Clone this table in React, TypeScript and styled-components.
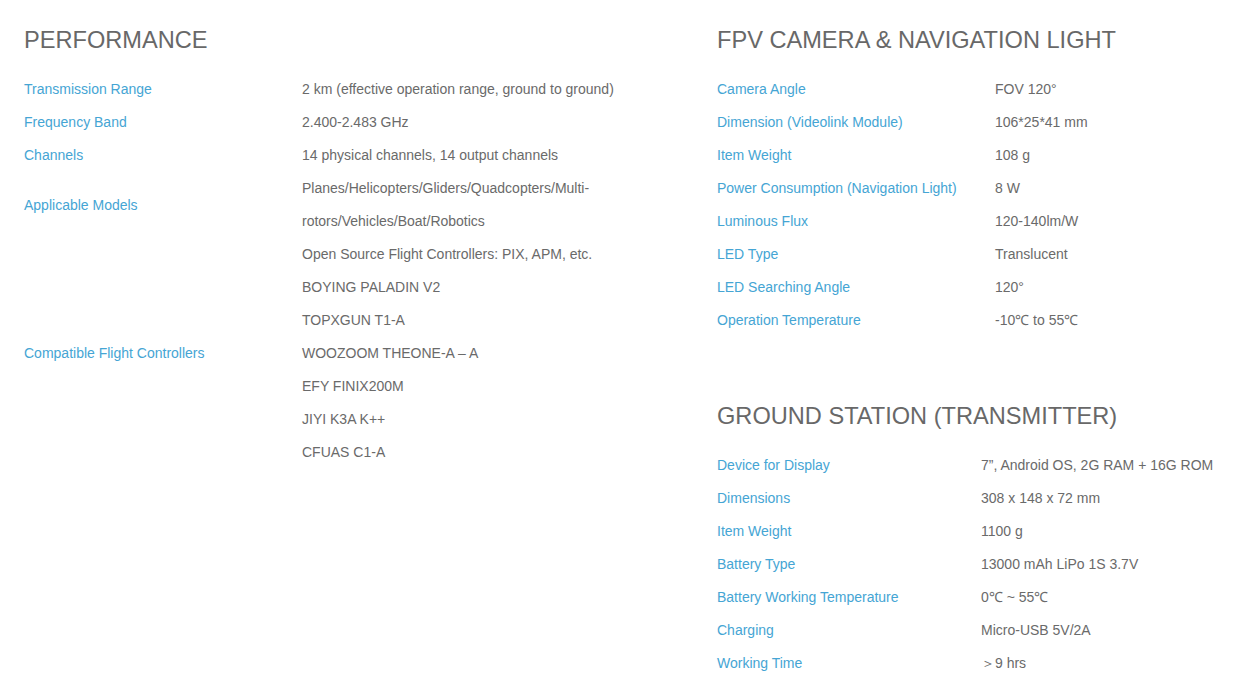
import React from 'react';
import styled, { createGlobalStyle } from 'styled-components';

const GlobalStyle = createGlobalStyle`
  html, body {
    margin: 0;
    padding: 0;
    background: #ffffff;
  }
  body {
    font-family: "Liberation Sans", Arial, sans-serif;
    -webkit-font-smoothing: antialiased;
  }
`;

const Page = styled.div`
  display: grid;
  grid-template-columns: 693px 1fr;
  padding: 26px 0 0 24px;
  width: 1252px;
  box-sizing: border-box;
  overflow: hidden;
`;

const Column = styled.div`
  display: flex;
  flex-direction: column;
`;

const Section = styled.section<{ $gap?: number }>`
  margin-bottom: ${p => p.$gap || 0}px;
`;

const Heading = styled.h2`
  margin: 0 0 19px;
  font-size: 23.6px;
  line-height: 28px;
  font-weight: 400;
  color: #686868;
`;

const SpecGrid = styled.div<{ $labelWidth: number }>`
  display: grid;
  grid-template-columns: ${p => p.$labelWidth}px auto;
  justify-content: start;
  align-items: center;
  font-size: 14px;
  line-height: 33px;
`;

const Label = styled.div`
  color: #45a5d4;
`;

const Value = styled.div`
  color: #6a6a6a;
  white-space: nowrap;
`;

type Spec = { label: string; values: React.ReactNode[] };

const performance: Spec[] = [
  { label: 'Transmission Range', values: ['2 km (effective operation range, ground to ground)'] },
  { label: 'Frequency Band', values: ['2.400-2.483 GHz'] },
  { label: 'Channels', values: ['14 physical channels, 14 output channels'] },
  {
    label: 'Applicable Models',
    values: ['Planes/Helicopters/Gliders/Quadcopters/Multi-', 'rotors/Vehicles/Boat/Robotics'],
  },
  {
    label: 'Compatible Flight Controllers',
    values: [
      'Open Source Flight Controllers: PIX, APM, etc.',
      'BOYING PALADIN V2',
      'TOPXGUN T1-A',
      'WOOZOOM THEONE-A \u2013 A',
      'EFY FINIX200M',
      'JIYI K3A K++',
      'CFUAS C1-A',
    ],
  },
];

const camera: Spec[] = [
  { label: 'Camera Angle', values: ['FOV 120\u00b0'] },
  { label: 'Dimension (Videolink Module)', values: ['106*25*41 mm'] },
  { label: 'Item Weight', values: ['108 g'] },
  { label: 'Power Consumption (Navigation Light)', values: ['8 W'] },
  { label: 'Luminous Flux', values: ['120-140lm/W'] },
  { label: 'LED Type', values: ['Translucent'] },
  { label: 'LED Searching Angle', values: ['120\u00b0'] },
  { label: 'Operation Temperature', values: ['-10\u2103 to 55\u2103'] },
];

const ground: Spec[] = [
  { label: 'Device for Display', values: ['7\u201d, Android OS, 2G RAM + 16G ROM'] },
  { label: 'Dimensions', values: ['308 x 148 x 72 mm'] },
  { label: 'Item Weight', values: ['1100 g'] },
  { label: 'Battery Type', values: ['13000 mAh LiPo 1S 3.7V'] },
  { label: 'Battery Working Temperature', values: ['0\u2103 ~ 55\u2103'] },
  { label: 'Charging', values: ['Micro-USB 5V/2A'] },
  { label: 'Working Time', values: ['\uff1e9 hrs'] },
];

const SpecTable = ({ specs, labelWidth }: { specs: Spec[]; labelWidth: number }) => (
  <SpecGrid $labelWidth={labelWidth}>
    {specs.map(spec => (
      <React.Fragment key={spec.label}>
        <Label>{spec.label}</Label>
        <Value>
          {spec.values.map((v, i) => (
            <div key={i}>{v}</div>
          ))}
        </Value>
      </React.Fragment>
    ))}
  </SpecGrid>
);

const App = () => (
  <>
    <GlobalStyle />
    <Page>
      <Column>
        <Section>
          <Heading>PERFORMANCE</Heading>
          <SpecTable specs={performance} labelWidth={278} />
        </Section>
      </Column>
      <Column>
        <Section $gap={65}>
          <Heading>FPV CAMERA &amp; NAVIGATION LIGHT</Heading>
          <SpecTable specs={camera} labelWidth={278} />
        </Section>
        <Section>
          <Heading>GROUND STATION (TRANSMITTER)</Heading>
          <SpecTable specs={ground} labelWidth={264} />
        </Section>
      </Column>
    </Page>
  </>
);

export default App;
